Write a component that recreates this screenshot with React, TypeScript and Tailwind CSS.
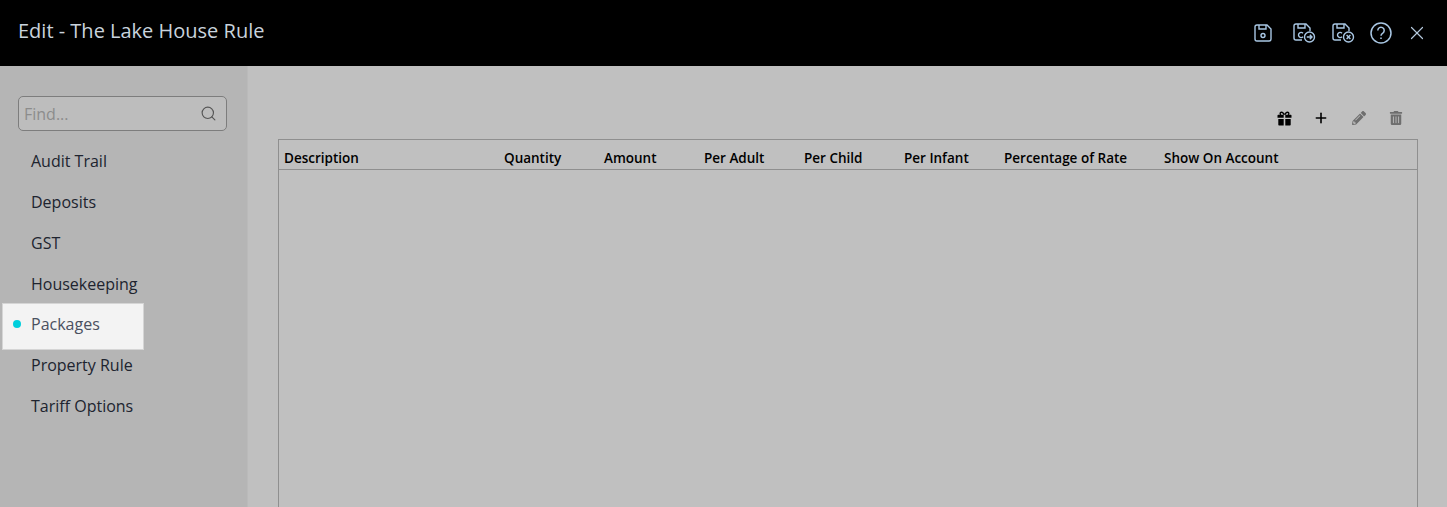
import { Plus, Search, X } from "lucide-react";
import { FaPencilAlt, FaTrashAlt } from "react-icons/fa";

const navItems = ["Audit Trail", "Deposits", "GST", "Housekeeping", "Packages", "Property Rule", "Tariff Options"];

const columns = [
  { label: "Description", width: "w-[220px]" },
  { label: "Quantity", width: "w-[100px]" },
  { label: "Amount", width: "w-[100px]" },
  { label: "Per Adult", width: "w-[100px]" },
  { label: "Per Child", width: "w-[100px]" },
  { label: "Per Infant", width: "w-[100px]" },
  { label: "Percentage of Rate", width: "w-[160px]" },
  { label: "Show On Account", width: "w-[160px]" },
];

function SaveBody({ cut }: { cut?: boolean }) {
  return (
    <>
      <path d={cut ? "M11 19H5a2 2 0 0 1-2-2V5a2 2 0 0 1 2-2h10l4 4v3" : "M5 3h10l4 4v10a2 2 0 0 1-2 2H5a2 2 0 0 1-2-2V5a2 2 0 0 1 2-2Z"} />
      <path d="M7 3v4h7V3" />
    </>
  );
}

function SaveIcon() {
  return (
    <svg width="22" height="22" viewBox="0 0 22 22" fill="none" stroke="currentColor" strokeWidth="1.4" className="mr-[4px]">
      <SaveBody />
      <circle cx="11" cy="13.5" r="2" />
    </svg>
  );
}

function SaveCloseIcon({ mark }: { mark: "arrow" | "x" }) {
  return (
    <svg width="26" height="24" viewBox="0 0 26 24" fill="none" stroke="currentColor" strokeWidth="1.4">
      <SaveBody cut />
      <path d="M12 12.2a2.600 2.600 0 1 0 0 3.600" />
      <circle cx="18.5" cy="16" r="5" />
      {mark === "arrow" ? (
        <path d="M15.800 16h5.200M18.800 13.800 21 16l-2.200 2.200" />
      ) : (
        <path d="m16.600 14.100 3.800 3.800M20.400 14.100l-3.800 3.800" />
      )}
    </svg>
  );
}

function GiftIcon() {
  return (
    <svg width="15" height="15" viewBox="0 0 15 15" className="mt-[2px] text-black" fill="currentColor">
      <path d="M4.600.6C3.300.6 2.500 1.500 2.500 2.500c0 .5.200 1 .5 1.300H1.200C.8 3.800.5 4.100.5 4.500v2.300h6.200V3.800h1.600v3h6.200V4.500c0-.4-.3-.7-.7-.7H12c.3-.4.500-.8.500-1.300 0-1-.8-1.900-2.100-1.900-1.300 0-2.300 1.100-2.900 2.200C6.900 1.700 5.900.6 4.600.6Zm0 1.300c.7 0 1.400.9 1.800 1.900H4.600c-.5 0-.8-.4-.8-1 0-.5.300-.9.800-.9Zm5.800 0c.5 0 .8.400.8.900 0 .6-.3 1-.8 1H8.600c.4-1 1.100-1.900 1.800-1.900Z" />
      <path d="M1.300 8.100h5.400v6.300H2.300c-.6 0-1-.4-1-1V8.100ZM8.300 8.100h5.400v5.300c0 .6-.4 1-1 1H8.300V8.100Z" />
    </svg>
  );
}

export default function App() {
  return (
    <div className="flex h-[507px] w-[1447px] flex-col overflow-hidden bg-[#c0c0c0] font-['Open_Sans',sans-serif]">
      <header className="flex h-[66px] shrink-0 items-center justify-between bg-black pl-[18px] pr-[19px] pb-[4px]">
        <h1 className="text-[20px] font-normal text-[#c9d3dd]">Edit - The Lake House Rule</h1>
        <div className="flex items-center gap-[13px] pt-[4px] text-[#a9c7e4]">
          <SaveIcon />
          <SaveCloseIcon mark="arrow" />
          <SaveCloseIcon mark="x" />
          <svg width="24" height="24" viewBox="0 0 24 24" fill="none" stroke="currentColor" strokeWidth="1.500">
            <circle cx="12" cy="12" r="10" />
            <path d="M8.800 9.400a3.200 3.200 0 1 1 5 2.700c-1.100.7-1.800 1.300-1.800 2.600" />
            <path d="M12 16.500v1.600" />
          </svg>
          <X size={22} strokeWidth={1.3} className="text-[#b4c8dc]" />
        </div>
      </header>

      <div className="flex min-h-0 flex-1">
        <aside className="w-[248px] shrink-0 border-r border-[#bababa] bg-[#b5b5b5] pt-[30px]">
          <div className="mx-[18px] mr-[20px] flex h-[35px] items-center justify-between rounded-[5px] border border-[#7d7d7d] bg-[#bdbdbd] pl-[5px] pr-[9px]">
            <span className="text-[16px] text-[#8c8c8c]">Find...</span>
            <Search size={17} strokeWidth={1.6} className="text-[#555]" />
          </div>
          <nav className="mt-[9px] flex flex-col">
            {navItems.map((item) =>
              item === "Packages" ? (
                <div
                  key={item}
                  className="relative z-10 -mb-[6px] -mt-[1px] ml-[2px] flex h-[47px] w-[142px] items-center border border-[#d5d5d5] bg-[#f3f3f3] pb-[5px] pl-[10px]"
                >
                  <span className="h-[8px] w-[8px] rounded-full bg-[#00cfdc]" />
                  <span className="ml-[10px] text-[16px] leading-none text-[#4a5060]">{item}</span>
                </div>
              ) : (
                <div key={item} className="flex h-[41px] items-center pl-[31px] text-[16px] text-[#20242f]">
                  {item}
                </div>
              ),
            )}
          </nav>
        </aside>

        <main className="min-w-0 flex-1 pl-[30px] pr-[29px] pt-[43px]">
          <div className="flex h-[30px] items-start justify-end pr-[15px]">
            <GiftIcon />
            <Plus size={16} strokeWidth={2.4} className="ml-[21px] mt-[1px] text-black" />
            <FaPencilAlt size={14} className="ml-[23px] mt-[2px] text-[#6e6e6e]" />
            <FaTrashAlt size={14} className="ml-[23px] mt-[2px] text-[#6e6e6e]" />
          </div>
          <div className="h-[400px] border border-[#8f8f8f]">
            <div className="flex h-[30px] items-center border-b border-[#8f8f8f] pl-[5px] pt-[8px] text-[13.5px] font-semibold text-black">
              {columns.map((c) => (
                <div key={c.label} className={`${c.width} shrink-0 whitespace-nowrap`}>
                  {c.label}
                </div>
              ))}
            </div>
          </div>
        </main>
      </div>
    </div>
  );
}
